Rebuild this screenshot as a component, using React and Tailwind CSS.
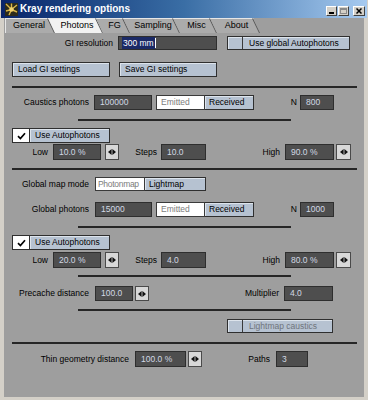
import React from "react";

const tabs = [
  { label: "General", w: "w-[50px]", first: true },
  { label: "Photons", w: "w-[55px]", active: true },
  { label: "FG", w: "w-[34px]" },
  { label: "Sampling", w: "w-[57px]" },
  { label: "Misc", w: "w-[44px]" },
  { label: "About", w: "w-[50px]" },
];

function Tab({ tab }) {
  const shape = tab.first
    ? "[clip-path:polygon(0_0,calc(100%_-_7px)_0,100%_100%,0_100%)]"
    : "[clip-path:polygon(0_0,calc(100%_-_7px)_0,100%_100%,7px_100%)]";
  return (
    <div className={`relative h-full ${tab.w} ${tab.first ? "ml-[1px]" : "-ml-[7px]"}`}>
      <div
        className={`absolute inset-0 ${shape} ${
          tab.active ? "bg-[#f2f2f2]" : "bg-[#ababab]"
        } border-t border-[#e6e6e6] ${tab.first ? "border-l" : ""}`}
      />
      <svg className="absolute right-0 top-0" width="8" height="15" viewBox="0 0 8 15">
        <line x1="0.5" y1="0.5" x2="7.5" y2="15" stroke="#5a5a5a" strokeWidth="1" />
      </svg>
      <div
        className={`relative h-full flex items-center justify-center pr-[4px] ${
          tab.first ? "pl-[2px]" : "pl-[7px]"
        }`}
      >
        {tab.label}
      </div>
    </div>
  );
}

function Field({ w, ml = "", children }) {
  return (
    <div
      className={`${w} ${ml} h-full bg-[#4e4e4e] border border-[#2e2e2e] flex items-center pl-[5px] text-[#d2d9e4] whitespace-nowrap overflow-hidden`}
    >
      {children}
    </div>
  );
}

function Arrows({ w, ml }) {
  return (
    <div
      className={`${w} ${ml} h-full bg-[#d8d8d8] border border-[#4a4a4a] flex items-center justify-center`}
    >
      <svg width="8" height="6" viewBox="0 0 8 6">
        <path d="M0 3L3.6 0V6Z M8 3L4.4 0V6Z" fill="#111" />
      </svg>
    </div>
  );
}

function Btn({ w, ml = "", children }) {
  return (
    <div
      className={`${w} ${ml} h-full bg-[#b6c2d1] border border-[#2f2f2f] shadow-[inset_1px_1px_0_#dde4ec] flex items-center pl-[5px] whitespace-nowrap`}
    >
      {children}
    </div>
  );
}

function SplitBtn({ w, ml, dim, children }) {
  return (
    <div
      className={`${w} ${ml} h-full bg-[#b6c2d1] border border-[#2f2f2f] shadow-[inset_1px_1px_0_#dde4ec] flex whitespace-nowrap`}
    >
      <div className="w-[15px] h-full border-r border-[#3a3a3a]" />
      <div className={`flex items-center pl-[6px] ${dim ? "text-[#6f747c]" : ""}`}>{children}</div>
    </div>
  );
}

function Toggle({ ml, left, right, lw, rw, lp = "pl-[4px]" }) {
  return (
    <div className={`${ml} h-full flex`}>
      <div
        className={`${lw} ${lp} h-full bg-white border border-[#3a3a3a] flex items-center text-[#7c7c7c] whitespace-nowrap overflow-hidden`}
      >
        {left}
      </div>
      <div
        className={`${rw} h-full bg-[#b6c2d1] border border-l-0 border-[#2f2f2f] shadow-[inset_1px_1px_0_#dde4ec] flex items-center pl-[4px] whitespace-nowrap`}
      >
        {right}
      </div>
    </div>
  );
}

function Check({ children }) {
  return (
    <div className="ml-[8px] h-full flex">
      <div className="w-[18px] h-full bg-white border border-[#2f2f2f] flex items-center justify-center">
        <svg width="9" height="8" viewBox="0 0 9 8">
          <path d="M1 4.2L3.4 6.6L8 1.2" fill="none" stroke="#000" strokeWidth="1.7" />
        </svg>
      </div>
      <div className="w-[80px] h-full bg-[#b6c2d1] border border-l-0 border-[#2f2f2f] shadow-[inset_1px_1px_0_#dde4ec] flex items-center pl-[5px]">
        {children}
      </div>
    </div>
  );
}

function LongSep({ mt }) {
  return <div className={`${mt} ml-[8px] w-[345px] h-[2px] bg-[#262626] shrink-0`} />;
}

function ShortSep({ mt }) {
  return <div className={`${mt} ml-[74px] w-[213px] h-[2px] bg-[#262626] shrink-0`} />;
}

function LowRow({ mt, low, steps, high }) {
  return (
    <div className={`${mt} h-[16px] flex items-center shrink-0`}>
      <span className="w-[44px] text-right">Low</span>
      <Field w="w-[48px]" ml="ml-[5px]">{low}</Field>
      <Arrows w="w-[14px]" ml="ml-[4px]" />
      <span className="w-[38px] text-right">Steps</span>
      <Field w="w-[45px]" ml="ml-[4px]">{steps}</Field>
      <span className="w-[74px] text-right">High</span>
      <Field w="w-[49px]" ml="ml-[5px]">{high}</Field>
      <Arrows w="w-[15px]" ml="ml-[2px]" />
    </div>
  );
}

function PhotonsRow({ mt, label, value, n, fw, fml }) {
  return (
    <div className={`${mt} h-[15px] flex items-center shrink-0`}>
      <span className="w-[85px] text-right">{label}</span>
      <Field w={fw} ml={fml}>{value}</Field>
      <Toggle ml="ml-[4px]" left="Emitted" right="Received" lw="w-[49px]" rw="w-[49px]" />
      <span className="w-[43px] text-right">N</span>
      <Field w="w-[34px]" ml="ml-[3px]">{n}</Field>
    </div>
  );
}

export default function App() {
  return (
    <div className="w-[368px] h-[400px] bg-[#d4d0c8] flex flex-col font-['Liberation_Sans',Arial,sans-serif] text-[8.5px] leading-none text-black overflow-hidden">
      {/* title bar */}
      <div className="h-[18px] shrink-0 mx-[1px] bg-linear-to-r from-[#0a246a] via-[#3a6ea5] to-[#a6caf0] flex items-center">
        <svg className="ml-[4px]" width="13" height="13" viewBox="0 0 13 13">
          <rect width="13" height="13" fill="#2c2a1c" />
          <path
            d="M6.5 6.5L1 1M6.5 6.5L12 2M6.5 6.5L1 8M6.5 6.5L4 12M6.5 6.5L12 9M6.5 6.5L6.5 0.5"
            stroke="#d9b64a"
            strokeWidth="1.4"
          />
          <circle cx="6.5" cy="6.5" r="2.2" fill="#f0d070" />
        </svg>
        <span className="ml-[2px] text-white font-bold text-[10px]">Kray rendering options</span>
        <div className="ml-auto mr-[2px] mt-[4px] flex items-center">
          <div className="w-[11px] h-[10px] bg-[#d4d0c8] border border-[#404040] border-t-white border-l-white flex items-end justify-center pb-[1px]">
            <div className="w-[5px] h-[2px] bg-black" />
          </div>
          <div className="w-[11px] h-[10px] ml-[1px] bg-[#d4d0c8] border border-[#404040] border-t-white border-l-white flex items-center justify-center">
            <div className="w-[7px] h-[6px] border border-[#8a8a8a] border-t-2" />
          </div>
          <div className="w-[12px] h-[10px] ml-[4px] bg-[#d4d0c8] border border-[#404040] border-t-white border-l-white flex items-center justify-center">
            <svg width="6" height="6" viewBox="0 0 6 6">
              <path d="M0.5 0.5L5.5 5.5M5.5 0.5L0.5 5.5" stroke="#000" strokeWidth="1.5" />
            </svg>
          </div>
        </div>
      </div>

      {/* body */}
      <div className="ml-[4px] w-[360px] h-[379px] shrink-0 bg-[#9e9e9e] flex flex-col">
        <div className="h-[15px] flex shrink-0 text-[9px]">
          {tabs.map((t) => (
            <Tab key={t.label} tab={t} />
          ))}
        </div>

        <div className="mt-[3px] h-[14px] flex items-center shrink-0">
          <span className="w-[109px] text-right">GI resolution</span>
          <div className="ml-[5px] w-[99px] h-full bg-[#4e4e4e] border border-[#2e2e2e] flex items-center pl-[3px]">
            <span className="bg-[#1b2a66] text-white px-[1px] py-[2px]">300 mm</span>
            <span className="w-px h-[10px] bg-white" />
          </div>
          <SplitBtn w="w-[123px]" ml="ml-[10px]">Use global Autophotons</SplitBtn>
        </div>

        <div className="mt-[12px] h-[15px] flex items-center shrink-0">
          <Btn w="w-[98px]" ml="ml-[8px]">Load GI settings</Btn>
          <Btn w="w-[98px]" ml="ml-[9px]">Save GI settings</Btn>
        </div>

        <LongSep mt="mt-[9px]" />

        <PhotonsRow mt="mt-[7px]" label="Caustics photons" value="100000" n="800" fw="w-[58px]" fml="ml-[5px]" />

        <ShortSep mt="mt-[9px]" />

        <div className="mt-[7px] h-[15px] flex items-center shrink-0">
          <Check>Use Autophotons</Check>
        </div>

        <LowRow mt="mt-[1px]" low="10.0 %" steps="10.0" high="90.0 %" />

        <LongSep mt="mt-[8px]" />

        <div className="mt-[7px] h-[14px] flex items-center shrink-0">
          <span className="w-[85px] text-right">Global map mode</span>
          <Toggle
            ml="ml-[6px]"
            left="Photonmap"
            right="Lightmap"
            lw="w-[50px]"
            rw="w-[61px]"
            lp="pl-[2px] tracking-[-0.3px]"
          />
        </div>

        <PhotonsRow mt="mt-[11px]" label="Global photons" value="15000" n="1000" fw="w-[57px]" fml="ml-[6px]" />

        <ShortSep mt="mt-[9px]" />

        <div className="mt-[7px] h-[15px] flex items-center shrink-0">
          <Check>Use Autophotons</Check>
        </div>

        <LowRow mt="mt-[2px]" low="20.0 %" steps="4.0" high="80.0 %" />

        <ShortSep mt="mt-[7px]" />

        <div className="mt-[9px] h-[15px] flex items-center shrink-0">
          <span className="w-[85px] text-right">Precache distance</span>
          <Field w="w-[38px]" ml="ml-[6px]">100.0</Field>
          <Arrows w="w-[14px]" ml="ml-[2px]" />
          <span className="w-[130px] text-right">Multiplier</span>
          <Field w="w-[49px]" ml="ml-[5px]">4.0</Field>
        </div>

        <ShortSep mt="mt-[8px]" />

        <div className="mt-[8px] h-[14px] flex items-center shrink-0">
          <SplitBtn w="w-[106px]" ml="ml-[223px]" dim>Lightmap caustics</SplitBtn>
        </div>

        <LongSep mt="mt-[9px]" />

        <div className="mt-[7px] h-[16px] flex items-center shrink-0">
          <span className="w-[125px] text-right">Thin geometry distance</span>
          <Field w="w-[51px]" ml="ml-[6px]">100.0 %</Field>
          <Arrows w="w-[14px]" ml="ml-[2px]" />
          <span className="w-[68px] text-right">Paths</span>
          <Field w="w-[32px]" ml="ml-[6px]">3</Field>
        </div>
      </div>
    </div>
  );
}
